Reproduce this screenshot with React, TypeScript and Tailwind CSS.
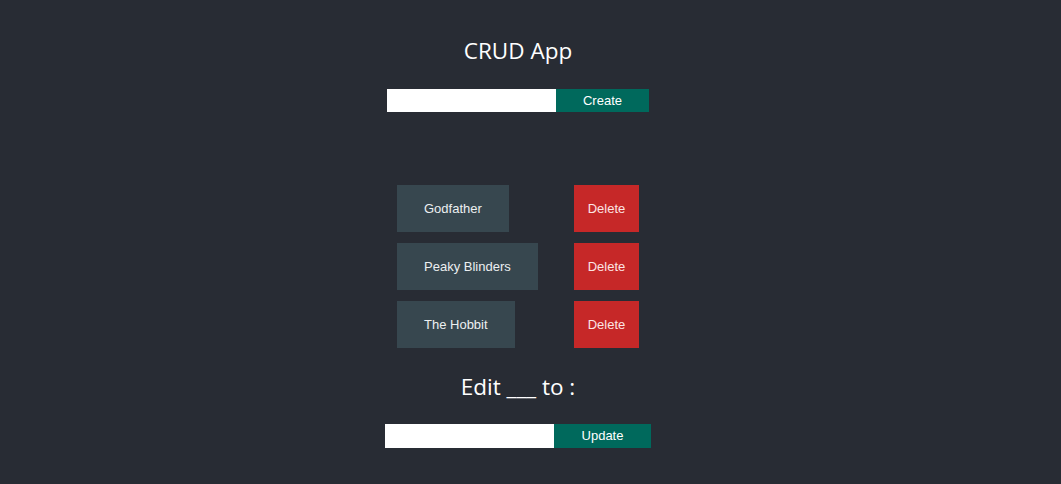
import React, { useState } from "react";

const initial = ["Godfather", "Peaky Blinders", "The Hobbit"];

export default function App() {
    const [items, setItems] = useState<string[]>(initial);
    const [text, setText] = useState("");
    const [editText, setEditText] = useState("");

    return (
        <div className="min-h-[484px] w-full bg-[#282c34] text-white font-['Liberation_Sans',Arial,sans-serif]">
            <div className="w-[1036px] flex flex-col items-center pt-[36px]">
                <h1 className="text-[22.5px] leading-[30px] font-['Open_Sans','Noto_Sans',sans-serif]">CRUD App</h1>
                <div className="flex mt-[23px]">
                    <input
                        value={text}
                        onChange={e => setText(e.target.value)}
                        className="w-[169px] h-[23px] bg-white text-black outline-none px-1 text-[13px]"
                    />
                    <button
                        type="button"
                        onClick={() => { if (text) { setItems([...items, text]); setText(""); } }}
                        className="w-[93px] h-[23px] bg-[#00695c] text-[13px] text-white"
                    >
                        Create
                    </button>
                </div>

                <ul className="w-[242px] mt-[73px] flex flex-col gap-[11px]">
                    {items.map((item, idx) => (
                        <li key={idx} className="flex">
                            <div className="w-[177px]">
                                <div className="inline-flex items-center h-[47px] px-[27px] bg-[#37474f] text-[13px] text-[#eceff1]">{item}</div>
                            </div>
                            <button
                                type="button"
                                onClick={() => setItems(items.filter((_, i) => i !== idx))}
                                className="w-[65px] h-[47px] bg-[#c62828] text-[13px] text-[#fce4e4]"
                            >
                                Delete
                            </button>
                        </li>
                    ))}
                </ul>

                <h2 className="mt-[24px] text-[22.5px] leading-[30px] font-['Open_Sans','Noto_Sans',sans-serif]">Edit ___ to :</h2>
                <div className="flex mt-[22px]">
                    <input
                        value={editText}
                        onChange={e => setEditText(e.target.value)}
                        className="w-[169px] h-[24px] bg-white text-black outline-none px-1 text-[13px]"
                    />
                    <button type="button" className="w-[97px] h-[24px] bg-[#00695c] text-[13px] text-white">
                        Update
                    </button>
                </div>
            </div>
        </div>
    );
}
